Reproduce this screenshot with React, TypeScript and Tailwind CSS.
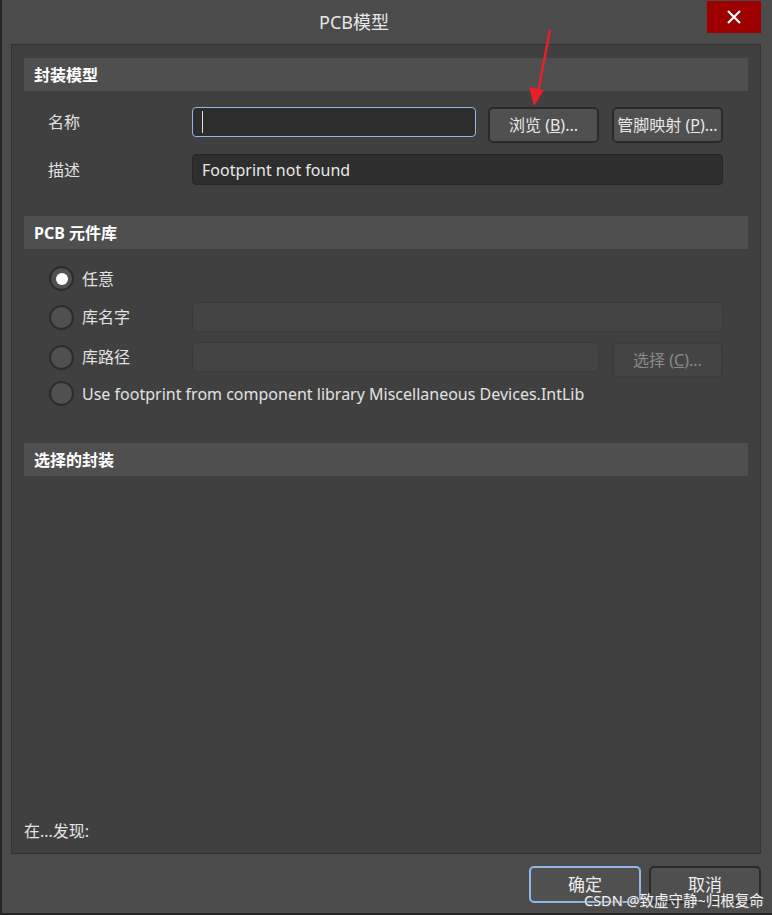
import React from "react";

const font = { fontFamily: '"Noto Sans", "Noto Sans CJK SC", sans-serif' };

function Radio({ checked }: { checked?: boolean }) {
  return (
    <div className="w-[25px] h-[25px] rounded-full bg-[#505050] border-2 border-[#2c2c2c] flex items-center justify-center shrink-0">
      {checked && <div className="w-[12px] h-[12px] rounded-full bg-white" />}
    </div>
  );
}

function Btn({ children, disabled }: { children: React.ReactNode; disabled?: boolean }) {
  return (
    <div
      className={
        "w-[111px] h-[36px] rounded-[5px] flex items-center justify-center text-[16px] shrink-0 " +
        (disabled
          ? "bg-[#444444] border-2 border-[#3c3c3c] text-[#8a8a8a]"
          : "bg-[#505050] border-2 border-[#2a2a2a] text-[#e8e8e8]")
      }
    >
      {children}
    </div>
  );
}

function Header({ children }: { children: React.ReactNode }) {
  return (
    <div className="h-[33px] bg-[#4f4f4f] flex items-center pl-[10px] text-[16px] font-bold text-white">
      {children}
    </div>
  );
}

export default function App() {
  return (
    <div
      className="relative w-[772px] h-[915px] bg-[#4b4b4b] border-l-2 border-b-2 border-[#262626] flex flex-col overflow-hidden"
      style={font}
    >
      {/* title bar */}
      <div className="relative h-[44px] flex items-center justify-center shrink-0">
        <span className="text-[18px] text-[#e6e6e6] ml-[-66px]">PCB模型</span>
        <div className="absolute top-[1px] right-[11px] w-[54px] h-[32px] bg-[#9e0000] flex items-center justify-center">
          <svg width="16" height="16" viewBox="0 0 16 16">
            <path d="M2 2 L14 14 M14 2 L2 14" stroke="white" strokeWidth="2.2" />
          </svg>
        </div>
      </div>

      {/* inner panel */}
      <div className="ml-[9px] w-[750px] h-[810px] border border-[#333333] bg-[#404040] px-[12px] pt-[13px] pb-[10px] flex flex-col text-[#e2e2e2] text-[16px] shrink-0">
        <Header>封装模型</Header>

        <div className="mt-[16px] flex items-start pl-[24px]">
          <div className="w-[144px] h-[30px] flex items-center">名称</div>
          <div className="w-[284px] h-[30px] bg-[#2d2d2d] border-[1.5px] border-[#8fb8e6] rounded-[4px] flex items-center pl-[9px]">
            <div className="w-[1px] h-[22px] bg-[#e0e0e0]" />
          </div>
          <div className="ml-[12px]">
            <Btn>
              浏览 (<span className="underline">B</span>)...
            </Btn>
          </div>
          <div className="ml-[13px]">
            <Btn>
              管脚映射 (<span className="underline">P</span>)...
            </Btn>
          </div>
        </div>

        <div className="mt-[11px] flex items-center pl-[24px]">
          <div className="w-[144px] h-[31px] flex items-center">描述</div>
          <div className="w-[531px] h-[31px] bg-[#2e2e2e] border border-[#262626] rounded-[4px] flex items-center pl-[9px] text-[#e8e8e8]">
            Footprint not found
          </div>
        </div>

        <div className="mt-[31px]">
          <Header>PCB 元件库</Header>
        </div>

        <div className="mt-[17px] flex items-center pl-[25px] h-[25px]">
          <Radio checked />
          <span className="ml-[8px]">任意</span>
        </div>

        <div className="mt-[11px] flex items-center pl-[25px] h-[30px]">
          <div className="w-[143px] flex items-center">
            <Radio />
            <span className="ml-[8px]">库名字</span>
          </div>
          <div className="w-[531px] h-[30px] bg-[#444444] border border-[#3a3a3a] rounded-[4px]" />
        </div>

        <div className="mt-[10px] flex items-start pl-[25px]">
          <div className="w-[143px] h-[30px] flex items-center">
            <Radio />
            <span className="ml-[8px]">库路径</span>
          </div>
          <div className="w-[407px] h-[30px] bg-[#444444] border border-[#3a3a3a] rounded-[4px]" />
          <div className="ml-[13px]">
            <Btn disabled>
              选择 (<span className="underline">C</span>)...
            </Btn>
          </div>
        </div>

        <div className="mt-[3px] flex items-center pl-[25px] h-[25px]">
          <Radio />
          <span className="ml-[8px]">Use footprint from component library Miscellaneous Devices.IntLib</span>
        </div>

        <div className="mt-[37px]">
          <Header>选择的封装</Header>
        </div>

        <div className="flex-1" />
        <div className="h-[24px] flex items-center">在...发现:</div>
      </div>

      {/* bottom buttons */}
      <div className="mt-[12px] flex justify-end pr-[11px] gap-[8px] text-[17px] text-[#eeeeee]">
        <div className="w-[112px] h-[37px] rounded-[5px] bg-[#505050] border-2 border-[#8fb8e6] flex items-center justify-center">
          确定
        </div>
        <div className="w-[112px] h-[37px] rounded-[5px] bg-[#4f4f4f] border-2 border-[#2a2a2a] flex items-center justify-center">
          取消
        </div>
      </div>

      {/* watermark */}
      <div
        className="absolute left-[582px] top-[890px] text-[14.5px] text-[#f2f2f2] whitespace-nowrap"
        style={{ textShadow: "0 0 2px #555, 1px 1px 1px #666" }}
      >
        CSDN @致虚守静~归根复命
      </div>

      {/* red arrow */}
      <svg className="absolute left-0 top-0 pointer-events-none" width="772" height="915">
        <line x1="548" y1="30" x2="536" y2="92" stroke="#e8202a" strokeWidth="2.5" />
        <polygon points="532,106 527,87 542,90" fill="#e8202a" />
      </svg>
    </div>
  );
}
